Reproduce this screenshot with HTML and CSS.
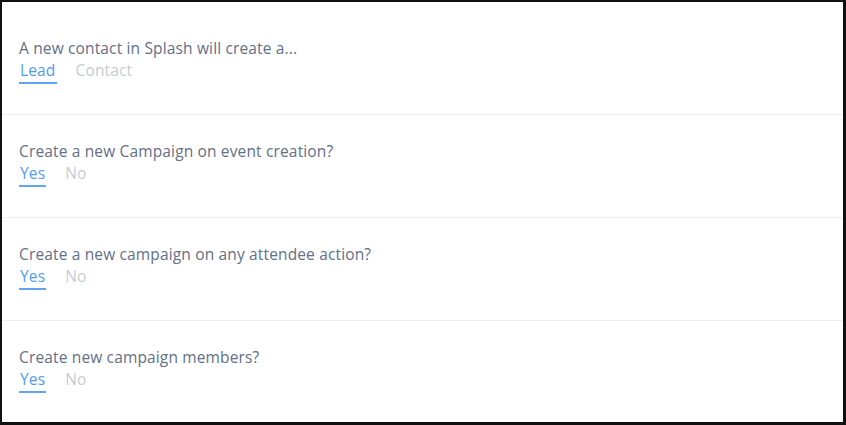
FILE: index.html
```html
<!DOCTYPE html>
<html>
<head>
<meta charset="utf-8">
<link rel="stylesheet" href="styles.css">
</head>
<body>
<div class="frame">
  <section class="setting first">
    <div class="label">A new contact in Splash will create a...</div>
    <div class="tabs"><span class="tab active">Lead</span><span class="tab">Contact</span></div>
  </section>
  <section class="setting">
    <div class="label">Create a new Campaign on event creation?</div>
    <div class="tabs"><span class="tab active">Yes</span><span class="tab">No</span></div>
  </section>
  <section class="setting">
    <div class="label">Create a new campaign on any attendee action?</div>
    <div class="tabs"><span class="tab active">Yes</span><span class="tab">No</span></div>
  </section>
  <section class="setting">
    <div class="label">Create new campaign members?</div>
    <div class="tabs"><span class="tab active">Yes</span><span class="tab">No</span></div>
  </section>
</div>
</body>
</html>
```
FILE: styles.css
```css
* { box-sizing: border-box; }
html, body { margin: 0; padding: 0; background: #fff; }
.frame {
  width: 846px;
  height: 425px;
  border-style: solid;
  border-color: #111;
  border-width: 2px 3px 3px 2px;
  background: #fff;
  font-family: "Open Sans", "Liberation Sans", sans-serif;
  font-size: 15.5px;
  letter-spacing: 0.15px;
  display: flex;
  flex-direction: column;
}
.setting {
  border-top: 1px solid #eceef1;
  padding: 27px 17px 30px;
}
.setting.first {
  border-top: none;
  padding-top: 37px;
  padding-bottom: 30px;
}
.label {
  line-height: 18px;
  color: #637086;
}
.tabs {
  margin-top: 4px;
  display: flex;
  gap: 18px;
}
.tab {
  line-height: 18px;
  padding: 0 1px 3px;
  border-bottom: 2px solid transparent;
  color: #c6ccd4;
}
.tab.active {
  color: #4f9cf4;
  border-bottom-color: #5ea5f6;
}
```
